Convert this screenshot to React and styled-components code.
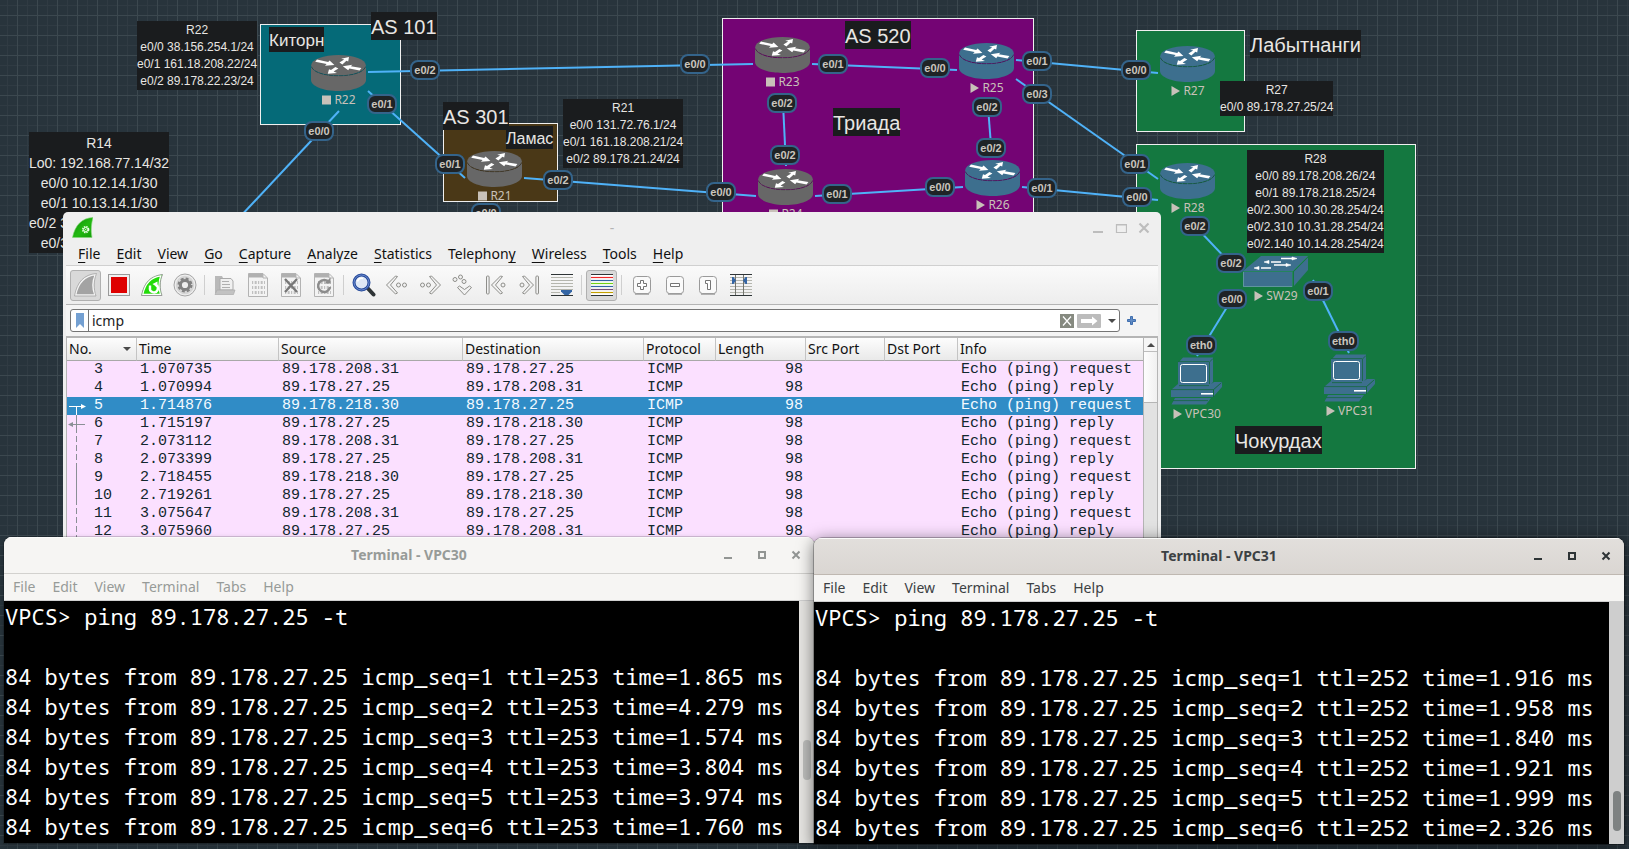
import React from "react";
import styled, { createGlobalStyle, css } from "styled-components";

const sans = '"Noto Sans", "Open Sans", sans-serif';
const helvetica = '"Liberation Sans", Arial, sans-serif';
const mono = '"Liberation Mono", "Courier New", monospace';
const terminalMono = '"Noto Sans Mono", "DejaVu Sans Mono", monospace';

const GlobalStyle = createGlobalStyle`
  * { box-sizing: border-box; }
  body { margin: 0; background: #28343c; }
  button { border: 0; padding: 0; background: none; font: inherit; color: inherit; }
`;

const Desktop = styled.main`
  position: relative;
  height: 100vh;
  overflow: hidden;
  background-color: #28343c;
  background-image:
    linear-gradient(90deg, #3c484f 1px, transparent 1px),
    linear-gradient(#3c484f 1px, transparent 1px),
    linear-gradient(90deg, #303b43 1px, transparent 1px),
    linear-gradient(#303b43 1px, transparent 1px);
  background-size: 20px 20px, 20px 20px, 10px 10px, 10px 10px;
  background-position: 17px 15px, 17px 15px, 7px 5px, 7px 5px;
`;

/* ---------- network topology ---------- */

const Zone = styled.div`
  position: absolute;
  left: ${(p) => p.$x}px;
  top: ${(p) => p.$y}px;
  width: ${(p) => p.$w}px;
  height: ${(p) => p.$h}px;
  border: 1px solid #f0f0f0;
  background: ${(p) => p.$fill};
`;

const Cables = styled.svg`
  position: absolute;
  inset: 0;
  width: 100%;
  height: 100%;
  stroke: #4fb2f8;
  stroke-width: 2;
`;

const Note = styled.div`
  position: absolute;
  left: ${(p) => p.$x}px;
  top: ${(p) => p.$y}px;
  padding-top: ${(p) => (p.$heading ? 2 : 1)}px;
  background: #1a1c1e;
  color: #e8e6e3;
  font-family: ${helvetica};
  font-size: ${(p) => p.$size}px;
  line-height: ${(p) => p.$line}px;
  text-align: center;
  white-space: pre;
`;

const Device = styled.div`
  position: absolute;
  left: ${(p) => p.$x}px;
  top: ${(p) => p.$y}px;
  display: flex;
  flex-direction: column;
  align-items: center;
  gap: 2px;
  svg { display: block; }
`;

const DeviceName = styled.div`
  display: flex;
  align-items: center;
  gap: 3px;
  padding-left: 1px;
  color: #c8c1b9;
  font: 12px/14px ${sans};
`;

const Port = styled.div`
  position: absolute;
  left: ${(p) => p.$x - 15}px;
  top: ${(p) => p.$y - 10}px;
  min-width: 30px;
  height: 20px;
  padding: 0 2px;
  border: 2px solid #34648b;
  border-radius: 8px;
  background: #1f2326;
  color: #cbc6bf;
  font: bold 11px/16px ${helvetica};
  text-align: center;
`;

const BLUE = "#3d6f8e";
const GREY = "#676767";

const zones = [
  [260, 24, 141, 101, "#056a78"],
  [443, 123, 115, 79, "#4a3817"],
  [722, 18, 312, 240, "#740474"],
  [1136, 30, 109, 102, "#147840"],
  [1136, 144, 280, 325, "#147840"],
];

const cables = [
  [368, 72, 753, 64],
  [368, 91, 465, 178],
  [339, 111, 210, 249],
  [524, 178, 756, 196],
  [812, 64, 957, 70],
  [783, 103, 786, 166],
  [1016, 60, 1158, 73],
  [1016, 79, 1158, 179],
  [988, 107, 992, 158],
  [815, 196, 963, 187],
  [1022, 187, 1158, 200],
  [1195, 226, 1231, 264],
  [1232, 299, 1197, 356],
  [1313, 280, 1349, 353],
];

const notes = [
  [137, 21, 12, 17, "R22\ne0/0 38.156.254.1/24\ne0/1 161.18.208.22/24\ne0/2 89.178.22.23/24"],
  [29, 132, 14, 20, "R14\nLo0: 192.168.77.14/32\ne0/0 10.12.14.1/30\ne0/1 10.13.14.1/30\ne0/2 38.156.254.14/24\ne0/3 10.14.19.1/30"],
  [371, 12, 20, 26, "AS 101"],
  [269, 27, 17, 23, "Киторн"],
  [443, 102, 20, 26, "AS 301"],
  [506, 126, 16, 21, "Ламас"],
  [563, 99, 12, 17, "R21\ne0/0 131.72.76.1/24\ne0/1 161.18.208.21/24\ne0/2 89.178.21.24/24"],
  [845, 21, 20, 26, "AS 520"],
  [833, 108, 20, 26, "Триада"],
  [1250, 30, 20, 26, "Лабытнанги"],
  [1220, 81, 12, 17, "R27\ne0/0 89.178.27.25/24"],
  [1247, 150, 12, 17, "R28\ne0/0 89.178.208.26/24\ne0/1 89.178.218.25/24\ne0/2.300 10.30.28.254/24\ne0/2.310 10.31.28.254/24\ne0/2.140 10.14.28.254/24"],
  [1235, 426, 20, 26, "Чокурдах"],
];

const devices = [
  ["R22", 311, 55, "router", false],
  ["R21", 467, 151, "router", false],
  ["R23", 755, 37, "router", false],
  ["R24", 758, 169, "router", false],
  ["R25", 959, 43, "router", true],
  ["R26", 965, 160, "router", true],
  ["R27", 1160, 46, "router", true],
  ["R28", 1160, 163, "router", true],
  ["SW29", 1243, 256, "switch", true],
  ["VPC30", 1171, 357, "pc", true],
  ["VPC31", 1324, 354, "pc", true],
];

const ports = [
  ["e0/2", 425, 70], ["e0/1", 382, 104], ["e0/0", 319, 131],
  ["e0/1", 450, 164], ["e0/2", 558, 180], ["e0/0", 486, 213],
  ["e0/0", 695, 64], ["e0/1", 833, 64], ["e0/2", 782, 103],
  ["e0/2", 785, 155], ["e0/0", 721, 192], ["e0/1", 837, 194],
  ["e0/0", 935, 68], ["e0/1", 1037, 61], ["e0/3", 1037, 94],
  ["e0/2", 987, 107], ["e0/2", 991, 148], ["e0/0", 940, 187],
  ["e0/1", 1042, 188], ["e0/0", 1136, 70], ["e0/1", 1135, 164],
  ["e0/0", 1137, 197], ["e0/2", 1195, 226], ["e0/2", 1231, 263],
  ["e0/0", 1232, 299], ["e0/1", 1318, 291], ["eth0", 1201, 345],
  ["eth0", 1343, 341],
];

const RouterIcon = ({ fill }) => (
  <svg width="55" height="36" viewBox="0 0 55 36" aria-hidden="true">
    <path d="M0 11.5 C2 17 12 21 27.5 21 S53 17 55 11.5 V25 C55 31 43 36 27.5 36 S0 31 0 25Z" fill={fill} />
    <ellipse cx="27.5" cy="10.3" rx="27.3" ry="10.3" fill={fill} />
    <path d="M.6 12 C3 17.4 13 20.8 27.5 20.8 S52 17.4 54.4 12" fill="none" stroke="#000" strokeOpacity=".32" strokeWidth=".8" strokeDasharray="4 1" />
    <g fill="#fff">
      <path d="M6 4.6 4.2 6.8 15.6 8.9 14 10.7 23.4 10 18.6 5.4 17.2 6.9Z" />
      <path d="M31.4 9.4 28.4 7.4 33.2 4.6 30.2 3.7 38 2 37.2 6.6 35.4 5.7Z" />
      <path d="M24.4 12 27.4 13.4 22.6 16.6 26 18 16.8 18.8 18 14.2 20 15.1Z" />
      <path d="M50.4 13 48.6 15.4 38.4 13.4 37.2 15.2 31.8 11.2 41.4 9.8 39.8 11.3Z" />
    </g>
  </svg>
);

const SwitchIcon = ({ fill }) => (
  <svg width="65" height="31" viewBox="0 0 65 31" aria-hidden="true">
    <path d="M18 0H65L50 15H0Z M0 16H49V31H0Z M51 15.4 65 1.4V14L51 30Z" fill={fill} />
    <path d="M0 15.5H49.5V31M50 15 64.5.5" fill="none" stroke="#2b8a6a" strokeWidth=".7" />
    <path d="M.5 16V30.5H49" fill="none" stroke="#6fa6a6" strokeWidth=".7" />
    <g stroke="#fff" strokeWidth="1.3" fill="#fff">
      <path d="M38 2.5H50M28 6H38M31 9H43M18 12H28" />
      <path d="M49 1 54 2.5 49 4ZM26 4.5 21 6 26 7.5ZM43 7.5 48 9 43 10.5ZM16 10.5 11 12 16 13.5Z" strokeWidth=".6" />
    </g>
  </svg>
);

const PcIcon = ({ fill }) => (
  <svg width="51" height="48" viewBox="0 0 51 48" aria-hidden="true">
    <path d="M12 .5H42V25L38 29V5H8Z M7 5H38V27H7Z M7 27H40L43 25H51L42 33H0Z M0 33H42V40H0Z M43 32.5 51 25.5V30L43 39Z M4 41H40L35 47.5H.5Z" fill={fill} />
    <rect x="9.5" y="7.5" width="26" height="18" rx="2" fill="none" stroke="#fff" />
    <path d="M38.5 5 42 1.5M38.5 5V27M7 4.6H38M0 32.6H42.5M42.5 32.6V40M42.5 32.6 50 26M8 28.6H38M2 43.6H37" fill="none" stroke="#14683f" strokeWidth=".8" />
    <path d="M30 36.8H42" stroke="#fff" strokeWidth="1.6" />
  </svg>
);

const deviceIcons = { router: RouterIcon, switch: SwitchIcon, pc: PcIcon };

const StateMark = ({ running }) => (
  <svg width="9" height="10" viewBox="0 0 9 10" aria-hidden="true">
    <path d={running ? "M.5 0 9 5 .5 10Z" : "M0 .5H9V9.5H0Z"} fill="#c8c1b9" />
  </svg>
);

const Topology = () => (
  <>
    {zones.map(([x, y, w, h, fill]) => (
      <Zone key={`${x}-${y}`} $x={x} $y={y} $w={w} $h={h} $fill={fill} />
    ))}
    <Cables aria-hidden="true">
      {cables.map(([x1, y1, x2, y2]) => (
        <line key={`${x1}-${y1}`} x1={x1} y1={y1} x2={x2} y2={y2} />
      ))}
    </Cables>
    {notes.map(([x, y, size, line, text]) => (
      <Note key={text} $x={x} $y={y} $size={size} $line={line} $heading={!text.includes("\n")}>{text}</Note>
    ))}
    {devices.map(([name, x, y, kind, running]) => {
      const Icon = deviceIcons[kind];
      return (
        <Device key={name} $x={x} $y={y}>
          <Icon fill={running ? BLUE : GREY} />
          <DeviceName><StateMark running={running} />{name}</DeviceName>
        </Device>
      );
    })}
    {ports.map(([name, x, y]) => (
      <Port key={`${x}-${y}`} $x={x} $y={y}>{name}</Port>
    ))}
  </>
);

/* ---------- Wireshark window ---------- */

const SharkWindow = styled.section`
  position: absolute;
  left: 63px;
  top: 212px;
  width: calc(100% - 531px);
  padding: 0 3px 3px;
  border-radius: 5px 5px 0 0;
  background: #efefef;
  color: #111;
  font: 14px/20px ${sans};
`;

const SharkTitleBar = styled.header`
  display: grid;
  grid-template-columns: 1fr auto 1fr;
  align-items: center;
  height: 31px;
  padding: 0 3px;
  color: #b4b4b4;
  svg { display: block; }
  > svg { margin-left: 3px; }
`;

const WindowTitle = styled.h1`
  margin: 0;
  font-size: 14px;
  line-height: 20px;
  font-weight: ${(p) => (p.$bold ? 700 : 400)};
`;

const TitleButtons = styled.div`
  display: flex;
  justify-content: flex-end;
`;

const TitleButton = styled.button`
  display: grid;
  place-items: center;
  width: ${(p) => p.$width}px;
  height: 24px;
`;

const MenuBar = styled.nav`
  display: flex;
  align-items: center;
  gap: ${(p) => p.$gap}px;
  height: ${(p) => p.$height}px;
  padding: 0 ${(p) => p.$inset}px;
  border-bottom: 1px solid #d0d0d0;
  u { text-underline-offset: 3px; text-decoration-thickness: 1px; }
`;

const Toolbar = styled.div`
  display: flex;
  align-items: center;
  height: 39px;
  padding-left: 3px;
  border-bottom: 1px solid #b4b4b4;
  background: linear-gradient(#fafafa, #ededed);
`;

const ToolButton = styled.button`
  display: grid;
  place-items: center;
  width: 31px;
  height: 31px;
  margin: 0 1px;
  border-radius: 3px;
  ${(p) => p.$on && css`
    border: 1px solid #b0b0b0;
    background: #d9d9d9;
  `}
`;

const ToolSeparator = styled.span`
  width: 1px;
  height: 20px;
  margin: 0 3px;
  background: #cfcfcf;
`;

const FilterBar = styled.form`
  display: flex;
  align-items: center;
  gap: 6px;
  height: 31px;
  padding: 0 20px 0 4px;
  background: #f4f4f4;
`;

const FilterBox = styled.div`
  flex: 1;
  display: flex;
  align-items: center;
  height: 23px;
  border: 1px solid #757575;
  border-radius: 3px;
  background: #fff;
  button { display: grid; place-items: center; }
`;

const Bookmark = styled.button`
  width: 18px;
  height: 21px;
  border-right: 1px solid #757575;
`;

const FilterInput = styled.input`
  flex: 1;
  min-width: 0;
  height: 21px;
  padding: 0 3px;
  border: 0;
  outline: 0;
  background: none;
  color: #222;
  font: 14px/20px ${sans};
`;

const ClearFilter = styled.button`
  width: 14px;
  height: 14px;
  background: #868a80;
`;

const ApplyFilter = styled.button`
  width: 24px;
  height: 14px;
  margin: 0 4px 0 3px;
  border-radius: 1px;
  background: #bcbcbc;
`;

const FilterHistory = styled.button`
  width: 14px;
  height: 21px;
`;

const AddFilter = styled.button`
  display: grid;
  place-items: center;
  width: 12px;
  height: 21px;
`;

const PacketPane = styled.div`
  display: flex;
  border: solid #b5b5b5;
  border-width: 2px 1px 0;
`;

const PacketTable = styled.table`
  flex: 1;
  width: 0;
  table-layout: fixed;
  border-collapse: separate;
  border-spacing: 0;
  white-space: nowrap;
`;

const Heading = styled.th`
  width: ${(p) => (p.$width ? `${p.$width}px` : "auto")};
  height: 23px;
  padding: 0 2px;
  border-bottom: 1px solid #a8a8a8;
  background: linear-gradient(#fdfdfd, #e9e9e9);
  font-weight: 400;
  text-align: left;
  & + & { border-left: 1px solid #c4c4c4; }
  div { display: flex; align-items: center; justify-content: space-between; padding-right: 3px; }
`;

const Packet = styled.tr`
  height: 18px;
  background: ${(p) => (p.$selected ? "#308cc6" : "#fbe0ff")};
  color: ${(p) => (p.$selected ? "#f4faff" : "#12272e")};
  font: 15px/18px ${mono};
`;

const Cell = styled.td`
  height: 18px;
  padding: 0 2px 0 4px;
  text-align: ${(p) => (p.$right ? "right" : "left")};
  overflow: hidden;
`;

const NumberCell = styled.td`
  padding: 0;
  div { display: flex; gap: 3px; height: 18px; }
`;

const PacketScroll = styled.div`
  display: flex;
  flex-direction: column;
  width: 14px;
  border-left: 1px solid #b5b5b5;
  background: #e2e2e2;
`;

const ScrollUp = styled.button`
  display: grid;
  place-items: center;
  height: 14px;
  border-bottom: 1px solid #bdbdbd;
  background: #f6f6f6;
`;

const ScrollHandle = styled.div`
  height: 51px;
  border-bottom: 1px solid #b5b5b5;
  background: linear-gradient(90deg, #fdfdfd, #f0f0f0);
`;

const SharkLogo = () => (
  <svg width="21" height="21" viewBox="0 0 21 21" aria-hidden="true">
    <defs>
      <linearGradient id="fin" x1="0" y1="0" x2="1" y2="1">
        <stop offset="0" stopColor="#0f8a08" />
        <stop offset=".55" stopColor="#22b911" />
        <stop offset="1" stopColor="#149a0a" />
      </linearGradient>
    </defs>
    <path d="M.5 20.5C3 8 10 1 21 .5 19.5 6 18.5 13 20 20.5Z" fill="url(#fin)" stroke="#87d97a" strokeWidth=".6" />
    <circle cx="13.7" cy="12.6" r="2.9" fill="none" stroke="#e9ffe5" strokeWidth="1.6" strokeDasharray="1.5 .8" />
    <circle cx="13.7" cy="12.6" r="2" fill="none" stroke="#e9ffe5" strokeWidth="1" />
    <circle cx="13.7" cy="12.6" r=".7" fill="#e9ffe5" />
  </svg>
);

const Svg = ({ children, size = 24 }) => (
  <svg width={size} height={size} viewBox={`0 0 ${size} ${size}`} fill="none" aria-hidden="true">{children}</svg>
);

const Sheet = ({ children }) => (
  <Svg>
    <path d="M2.5.5H17L21.5 5V23.5H2.5Z" fill="#f3f3f3" stroke="#b3b3b3" />
    <path d="M3 1H17V4.5H3Z" fill="#b0b0b0" />
    <path d="M17 1V5H21" stroke="#b3b3b3" />
    <path d="M6 9.500H19M6 14.500H19M6 19.500H19" stroke="#c0c0c0" strokeWidth="3" strokeDasharray="1.200 1.500 2 1.300" />
    {children}
  </Svg>
);

const KeyCap = ({ children }) => (
  <Svg>
    <rect x="3.5" y="3.5" width="17" height="17" rx="3" fill="#fafafa" stroke="#9a9a9a" />
    <path d="M5 21H19" stroke="#9c9c9c" strokeWidth="1.5" />
    <g fill="#fff" stroke="#757575">{children}</g>
  </Svg>
);

const chevronProps = { fill: "#f2f2f2", stroke: "#8e8e8a", strokeLinejoin: "round" };

const toolGroups = [
  [
    ["Start capture", <Svg><path d="M1.5 22C4 10 10 3 21.5 1.5 18.5 8 18.5 16 21 22Z" fill="#a3a3a3" stroke="#f5f5f5" strokeWidth="1.6" /><path d="M.5 23C3 9 10 1.5 22.5.5 19.5 8 19.5 16 22 23Z" stroke="#9b9b9b" strokeWidth=".7" /></Svg>, true],
    ["Stop capture", <Svg><rect x="1.5" y="1.5" width="21" height="21" fill="#f0f0f0" stroke="#9a9a9a" /><path d="M4 4H20V20H4Z" fill="#de0000" /></Svg>],
    ["Restart capture", <Svg><path d="M1.5 22.5C4 10 10 3 22.5 1.5 19.5 8 19.5 16 22 22.5Z" fill="#23dc09" stroke="#9b9b9b" /><path d="M2.8 21.4C5 10.5 10.5 4.3 20.7 2.8 18.6 9 18.6 16 20.5 21.4Z" stroke="#fff" strokeWidth="1.2" /><path d="M10 12.5V14.5A4 4 0 1 0 16 12" stroke="#fff" strokeWidth="2.4" /><path d="M17.5 8.5V14.5L12.5 11Z" fill="#fff" /></Svg>],
    ["Capture options", <Svg><circle cx="12" cy="12" r="11" fill="#eee" stroke="#a5a5a5" /><circle cx="12" cy="12" r="9.2" fill="#8d8d8d" fillOpacity=".25" /><circle cx="12" cy="12" r="6" stroke="#828282" strokeWidth="3" strokeDasharray="2.7 2" /><circle cx="12" cy="12" r="4.6" stroke="#828282" strokeWidth="3" fill="#eee" /></Svg>],
  ],
  [
    ["Open", <Svg><path d="M2 4.5V3H9L10 5H12V20H2Z" fill="#b9b9b9" /><path d="M7 5.5H18L20 8V17H7Z" fill="#f0f0f0" stroke="#aaa" /><path d="M9 8.5H16M9 11.5H17M9 14.5H17" stroke="#b0b0b0" /><path d="M4 17H22L20.5 21.5H2Z" fill="#c2c2c2" stroke="#aaa" strokeWidth=".7" /></Svg>],
    ["Save", <Sheet />],
    ["Close", <Sheet><path d="M6 6 18 19M18 6 6 19" stroke="#777" strokeWidth="2.4" /></Sheet>],
    ["Reload", <Sheet><path d="M17 9.5A6 6 0 1 0 18 14" stroke="#8c8c8c" strokeWidth="2.5" /><path d="M12.5 10.5H18.5V4.5Z" fill="#8c8c8c" /></Sheet>],
  ],
  [
    ["Find packet", <Svg><path d="M15.5 15 21.5 21.5" stroke="#2e3436" strokeWidth="4" strokeLinecap="round" /><circle cx="9.5" cy="9.5" r="7.5" fill="#dfe8f5" stroke="#264a9a" strokeWidth="3" /><circle cx="9.5" cy="9.5" r="7.5" stroke="#7c9bdc" strokeWidth=".8" /><path d="M5.5 8.5C6 6 8.5 5 11 5.5" stroke="#fff" strokeWidth="1.5" /></Svg>],
    ["Previous packet", <Svg><path d="M12.5 3.5 10.5 3 1.5 12 10.5 21 12.5 20 5.5 12Z" {...chevronProps} /><circle cx="13.5" cy="12" r="2" {...chevronProps} /><circle cx="19.5" cy="12" r="2" {...chevronProps} /></Svg>],
    ["Next packet", <Svg><path d="M11.5 3.5 13.5 3 22.5 12 13.5 21 11.5 20 18.5 12Z" {...chevronProps} /><circle cx="4.5" cy="12" r="2" {...chevronProps} /><circle cx="10.5" cy="12" r="2" {...chevronProps} /></Svg>],
    ["Go to packet", <Svg><circle cx="4" cy="6.5" r="2" {...chevronProps} /><circle cx="9.5" cy="4" r="2" {...chevronProps} /><circle cx="13" cy="8.5" r="2" {...chevronProps} /><path d="M6.5 14.5 8.5 13 13.5 16.5 18.5 13 20.5 14.5 13.5 22Z" {...chevronProps} /></Svg>],
    ["First packet", <Svg><rect x="2.5" y="3" width="2.6" height="18" rx="1" {...chevronProps} /><path d="M18.5 3.5 16.5 3 7.5 12 16.5 21 18.5 20 11.5 12Z" {...chevronProps} /><circle cx="19" cy="12" r="2" {...chevronProps} /></Svg>],
    ["Last packet", <Svg><rect x="18.9" y="3" width="2.6" height="18" rx="1" {...chevronProps} /><path d="M5.5 3.5 7.5 3 16.5 12 7.5 21 5.5 20 12.5 12Z" {...chevronProps} /><circle cx="5" cy="12" r="2" {...chevronProps} /></Svg>],
    ["Auto scroll", <Svg><path d="M1 1.5H23M1 22.5H23" stroke="#2e3436" /><path d="M1 4.5H23M1 7.5H23M1 10.5H23M1 13.5H23M1 16.5H23M1 19.5H10" stroke="#b5b6ae" /><path d="M11 17H22V18.5L18.5 22H14.5L11 18.5Z" fill="#3465a4" /></Svg>],
  ],
  [
    ["Colorize packets", <Svg><path d="M1 1H23V23H1Z" fill="#fff" /><g strokeWidth="1.2"><path d="M1 1.5H23M1 22.5H23" stroke="#2e3436" /><path d="M1 4.5H23" stroke="#ef2929" /><path d="M1 7.5H23" stroke="#3465a4" /><path d="M1 10.5H23" stroke="#73d216" /><path d="M1 13.5H23" stroke="#3465a4" /><path d="M1 16.5H23" stroke="#75507b" /><path d="M1 19.5H23" stroke="#c4a000" /></g></Svg>, true],
  ],
  [
    ["Zoom in", <KeyCap><path d="M10.5 7.5H13.5V10.5H16.5V13.5H13.5V16.5H10.5V13.5H7.5V10.5H10.5Z" /></KeyCap>],
    ["Zoom out", <KeyCap><path d="M7.5 10.5H16.5V13.5H7.5Z" /></KeyCap>],
    ["Normal size", <KeyCap><path d="M9.5 7.5H14.5V16.5H11.5V10.5H9.5Z" /></KeyCap>],
    ["Resize columns", <Svg><path d="M1 1.5H23M1 22.5H23" stroke="#2e3436" /><path d="M1 4.5H23M1 7.5H23M1 10.5H23M1 13.5H23M1 16.5H23M1 19.5H23" stroke="#b5b6ae" /><path d="M6.5 2V22M14.5 2V22" stroke="#73756f" /><path d="M3 4H4.5L7 7.5 4.500 11H3ZM18 4H16.5L14 7.5 16.5 11H18Z" fill="#3465a4" /></Svg>],
  ],
];

const sharkMenu = [
  ["", "F", "ile"], ["", "E", "dit"], ["", "V", "iew"], ["", "G", "o"], ["", "C", "apture"], ["", "A", "nalyze"],
  ["", "S", "tatistics"], ["Telephon", "y", ""], ["", "W", "ireless"], ["", "T", "ools"], ["", "H", "elp"],
];

const columns = [
  ["Time", 142], ["Source", 184], ["Destination", 181], ["Protocol", 72],
  ["Length", 90], ["Src Port", 79], ["Dst Port", 73], ["Info"],
];

const packets = [
  [3, "1.070735", "89.178.208.31", "89.178.27.25", "request"],
  [4, "1.070994", "89.178.27.25", "89.178.208.31", "reply"],
  [5, "1.714876", "89.178.218.30", "89.178.27.25", "request", "start"],
  [6, "1.715197", "89.178.27.25", "89.178.218.30", "reply", "reply"],
  [7, "2.073112", "89.178.208.31", "89.178.27.25", "request", "other"],
  [8, "2.073399", "89.178.27.25", "89.178.208.31", "reply", "other"],
  [9, "2.718455", "89.178.218.30", "89.178.27.25", "request", "same"],
  [10, "2.719261", "89.178.27.25", "89.178.218.30", "reply", "same"],
  [11, "3.075647", "89.178.208.31", "89.178.27.25", "request", "other"],
  [12, "3.075960", "89.178.27.25", "89.178.208.31", "reply", "other"],
];

const FlowMark = ({ kind }) => (
  <svg width="24" height="18" viewBox="0 0 24 18" fill="none" aria-hidden="true">
    {kind === "start" && (
      <>
        <path d="M2 9.5H15M9.5 9.5V18" stroke="#fff" />
        <path d="M14 7V12L19 9.5Z" fill="#fff" />
      </>
    )}
    {kind === "reply" && (
      <>
        <path d="M5 9.5H18M9.5 0V18" stroke="#8a8f96" />
        <path d="M6 7V12L1 9.5Z" fill="#8a8f96" />
      </>
    )}
    {kind === "same" && <path d="M9.5 0V18" stroke="#8a8f96" />}
    {kind === "other" && <path d="M9.5 0V18" stroke="#8a8f96" strokeDasharray="6 3" strokeDashoffset="-3" />}
  </svg>
);

const Triangle = ({ up }) => (
  <svg width="8" height="4" viewBox="0 0 8 4" aria-hidden="true">
    <path d={up ? "M0 4H8L4 0Z" : "M0 0H8L4 4Z"} fill="#4a4a4a" />
  </svg>
);

const Wireshark = () => (
  <SharkWindow aria-label="Packet capture">
    <SharkTitleBar>
      <SharkLogo />
      <WindowTitle>-</WindowTitle>
      <TitleButtons>
        <TitleButton $width={23} type="button" aria-label="Minimize"><Svg size={12}><path d="M1 10H11" stroke="#bdbdbd" strokeWidth="2" /></Svg></TitleButton>
        <TitleButton $width={23} type="button" aria-label="Maximize"><Svg size={12}><path d="M1.5 2.5H11.5V10.5H1.5ZM1 3H12" stroke="#bdbdbd" strokeWidth="1.2" /></Svg></TitleButton>
        <TitleButton $width={23} type="button" aria-label="Close"><Svg size={12}><path d="M1.5 1.5 10.5 10.5M10.5 1.5 1.5 10.5" stroke="#bdbdbd" strokeWidth="2.2" /></Svg></TitleButton>
      </TitleButtons>
    </SharkTitleBar>
    <MenuBar $gap={16} $height={23} $inset={12}>
      {sharkMenu.map(([before, key, after]) => (
        <button key={key + after} type="button">{before}<u>{key}</u>{after}</button>
      ))}
    </MenuBar>
    <Toolbar role="toolbar">
      {toolGroups.map((group, i) => (
        <React.Fragment key={i}>
          {i > 0 && <ToolSeparator />}
          {group.map(([label, icon, on]) => (
            <ToolButton key={label} type="button" aria-label={label} $on={on}>{icon}</ToolButton>
          ))}
        </React.Fragment>
      ))}
    </Toolbar>
    <FilterBar onSubmit={(e) => e.preventDefault()}>
      <FilterBox>
        <Bookmark type="button" aria-label="Saved filters">
          <svg width="8" height="15" viewBox="0 0 8 15" aria-hidden="true"><path d="M0 0H8V15L4 11 0 15Z" fill="#74a0d2" /></svg>
        </Bookmark>
        <FilterInput aria-label="Display filter" defaultValue="icmp" />
        <ClearFilter type="button" aria-label="Clear filter"><Svg size={14}><path d="M3 2.5 11 11.5M11 2.5 3 11.5" stroke="#fff" strokeWidth="1.2" /></Svg></ClearFilter>
        <ApplyFilter type="submit" aria-label="Apply filter">
          <svg width="24" height="14" viewBox="0 0 24 14" aria-hidden="true"><path d="M4 5H15V2.5L20.5 7 15 11.5V9H4Z" fill="#fff" /></svg>
        </ApplyFilter>
        <FilterHistory type="button" aria-label="Filter history"><Triangle /></FilterHistory>
      </FilterBox>
      <AddFilter type="button" aria-label="Add filter button"><Svg size={12}><path d="M4.5 1.5H6.5V4.5H9.5V6.5H6.5V9.5H4.5V6.5H1.5V4.5H4.5Z" fill="#5f8ac4" stroke="#3f6eae" /></Svg></AddFilter>
    </FilterBar>
    <PacketPane>
      <PacketTable>
        <thead>
          <tr>
            <Heading $width={69}><div>No. <Triangle /></div></Heading>
            {columns.map(([name, width]) => <Heading key={name} $width={width}>{name}</Heading>)}
          </tr>
        </thead>
        <tbody>
          {packets.map(([no, time, from, to, kind, mark]) => (
            <Packet key={no} $selected={no === 5}>
              <NumberCell><div><FlowMark kind={mark} />{no}</div></NumberCell>
              <Cell>{time}</Cell>
              <Cell>{from}</Cell>
              <Cell>{to}</Cell>
              <Cell>ICMP</Cell>
              <Cell $right>98</Cell>
              <Cell />
              <Cell />
              <Cell>Echo (ping) {kind}</Cell>
            </Packet>
          ))}
        </tbody>
      </PacketTable>
      <PacketScroll>
        <ScrollUp type="button" aria-label="Scroll up"><Triangle up /></ScrollUp>
        <ScrollHandle />
      </PacketScroll>
    </PacketPane>
  </SharkWindow>
);

/* ---------- terminal windows ---------- */

const TerminalFrame = styled.section`
  position: absolute;
  left: ${(p) => (p.$second ? "calc((100% - 9px) / 2 + 4px)" : "4px")};
  top: ${(p) => (p.$second ? 538 : 537)}px;
  width: calc((100% - 9px) / 2);
  overflow: hidden;
  border-radius: 8px 8px 0 0;
  background: #f6f5f3;
  color: ${(p) => (p.$active ? "#3c4143" : "#979b98")};
  font: 14px/20px ${sans};
  box-shadow: ${(p) => (p.$active
    ? "0 0 0 1px rgba(0,0,0,.25), 0 3px 16px 1px rgba(0,0,0,.5)"
    : "0 0 0 1px rgba(0,0,0,.15), 0 2px 6px rgba(0,0,0,.25)")};
`;

const TerminalTitleBar = styled.header`
  display: grid;
  grid-template-columns: 1fr auto 1fr;
  align-items: center;
  height: 37px;
  padding: 0 1px;
  box-shadow: inset 0 1px #fbfbfa;
  border-bottom: 1px solid ${(p) => (p.$active ? "#bfb8b1" : "#d2d1ce")};
  background: ${(p) => (p.$active ? "linear-gradient(#e2dfdc, #dad6d2)" : "#f6f5f3")};
`;

const TerminalBody = styled.div`
  display: flex;
  background: #000;
`;

const Output = styled.pre`
  flex: 1;
  min-width: 0;
  margin: 0;
  padding: 0 1px 2px;
  overflow: hidden;
  color: #fff;
  font: 22px/30px ${terminalMono};
`;

const TerminalScroll = styled.div`
  display: flex;
  flex-direction: column;
  justify-content: flex-end;
  align-items: center;
  width: 15px;
  padding-bottom: ${(p) => (p.$active ? 13 : 63)}px;
  background: ${(p) => (p.$active ? "#cecece" : "#e6e5e2")};
  &::after {
    content: "";
    width: 8px;
    height: 40px;
    border-radius: 4px;
    background: ${(p) => (p.$active ? "#7e8282" : "#bdbebc")};
  }
`;

const TerminalWindow = ({ name, ttl, times, active, second }) => {
  const ink = active ? "#2e3436" : "#929593";
  const lines = times.map((t, i) => `84 bytes from 89.178.27.25 icmp_seq=${i + 1} ttl=${ttl} time=${t} ms`);
  return (
    <TerminalFrame $active={active} $second={second} aria-label={name}>
      <TerminalTitleBar $active={active}>
        <span />
        <WindowTitle $bold>Terminal - {name}</WindowTitle>
        <TitleButtons>
          <TitleButton $width={34} type="button" aria-label="Minimize"><Svg size={10}><path d="M1 8H9" stroke={ink} strokeWidth="2" /></Svg></TitleButton>
          <TitleButton $width={34} type="button" aria-label="Maximize"><Svg size={10}><path d="M2 2H8V8H2Z" stroke={ink} strokeWidth="2" /></Svg></TitleButton>
          <TitleButton $width={34} type="button" aria-label="Close"><Svg size={10}><path d="M1.5 1.5 8.5 8.5M8.5 1.5 1.5 8.5" stroke={ink} strokeWidth="2" /></Svg></TitleButton>
        </TitleButtons>
      </TerminalTitleBar>
      <MenuBar $gap={17} $height={27} $inset={9}>
        {["File", "Edit", "View", "Terminal", "Tabs", "Help"].map((item) => (
          <button key={item} type="button">{item}</button>
        ))}
      </MenuBar>
      <TerminalBody>
        <Output>{`VPCS> ping 89.178.27.25 -t\n\n${lines.join("\n")}`}</Output>
        <TerminalScroll $active={active} />
      </TerminalBody>
    </TerminalFrame>
  );
};

export default function App() {
  return (
    <Desktop>
      <GlobalStyle />
      <Topology />
      <Wireshark />
      <TerminalWindow name="VPC30" ttl={253} times={["1.865", "4.279", "1.574", "3.804", "3.974", "1.760"]} />
      <TerminalWindow name="VPC31" ttl={252} times={["1.916", "1.958", "1.840", "1.921", "1.999", "2.326"]} active second />
    </Desktop>
  );
}
